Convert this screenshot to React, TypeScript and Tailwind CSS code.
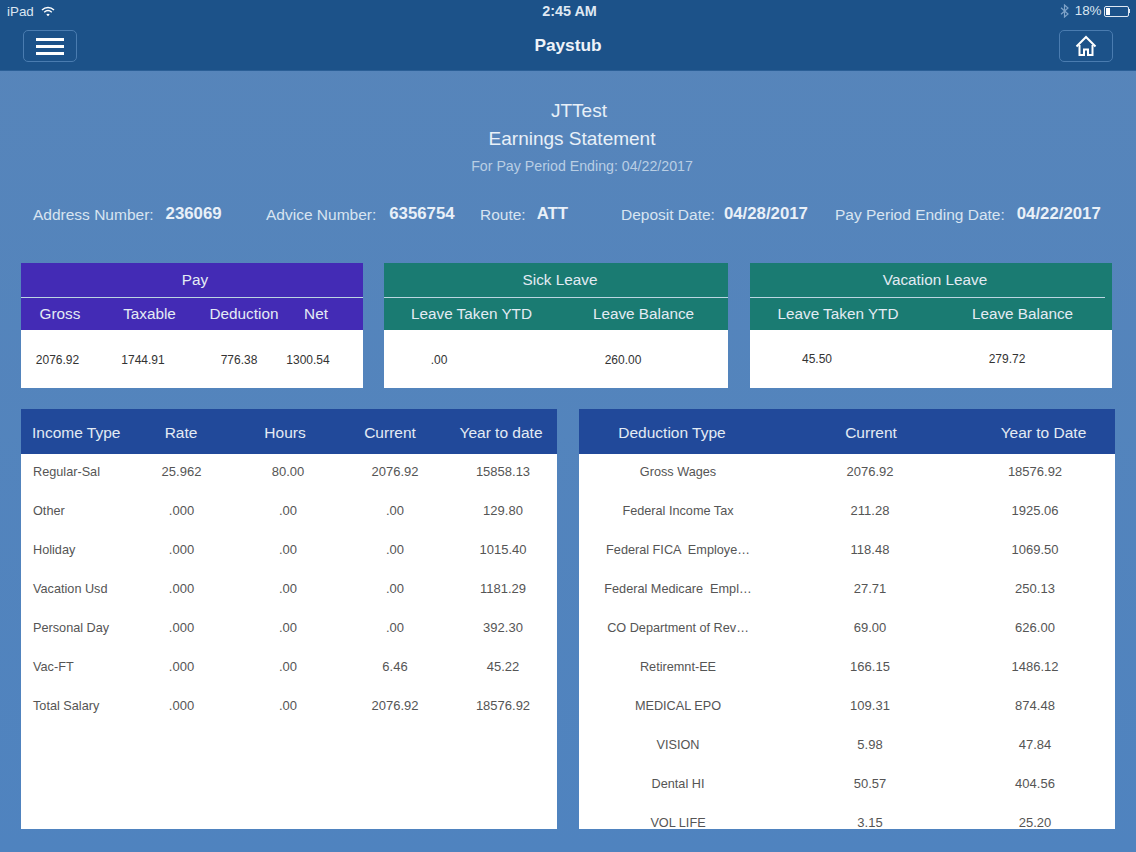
import React from "react";

const income = [
  ["Regular-Sal", "25.962", "80.00", "2076.92", "15858.13"],
  ["Other", ".000", ".00", ".00", "129.80"],
  ["Holiday", ".000", ".00", ".00", "1015.40"],
  ["Vacation Usd", ".000", ".00", ".00", "1181.29"],
  ["Personal Day", ".000", ".00", ".00", "392.30"],
  ["Vac-FT", ".000", ".00", "6.46", "45.22"],
  ["Total Salary", ".000", ".00", "2076.92", "18576.92"],
];

const deductions = [
  ["Gross Wages", "2076.92", "18576.92"],
  ["Federal Income Tax", "211.28", "1925.06"],
  ["Federal FICA  Employe…", "118.48", "1069.50"],
  ["Federal Medicare  Empl…", "27.71", "250.13"],
  ["CO Department of Rev…", "69.00", "626.00"],
  ["Retiremnt-EE", "166.15", "1486.12"],
  ["MEDICAL EPO", "109.31", "874.48"],
  ["VISION", "5.98", "47.84"],
  ["Dental HI", "50.57", "404.56"],
  ["VOL LIFE", "3.15", "25.20"],
];

function Info({ label, value, className, gap }: { label: string; value: string; className: string; gap: string }) {
  return (
    <div className={`flex items-center ${className}`}>
      <span className="text-[15.5px] text-[#d8e4f1]">{label}</span>
      <span className={`${gap} -mt-[2px] text-[16.8px] font-bold text-[#e9f0f8]`}>{value}</span>
    </div>
  );
}

function Wifi() {
  return (
    <svg width="14" height="11" viewBox="0 0 14 11" fill="none" stroke="#fff" strokeWidth="1.5">
      <path d="M1 4 C4.5 0.8 9.5 0.8 13 4" />
      <path d="M3.2 6.2 C5.4 4.3 8.6 4.3 10.8 6.2" />
      <path d="M7 10.2 L5.3 8.4 C6.3 7.6 7.7 7.6 8.7 8.4 Z" fill="#fff" stroke="none" />
    </svg>
  );
}

function Bluetooth() {
  return (
    <svg width="9" height="14" viewBox="0 0 9 14" fill="none" stroke="#7fa3c8" strokeWidth="1.2">
      <path d="M1 3.8 L8 10 L4.5 13 L4.5 1 L8 4 L1 10.2" />
    </svg>
  );
}

function Battery() {
  return (
    <div className="flex items-center">
      <div className="w-[25px] h-[11px] rounded-[2px] border border-[#dfe8f2] p-[1px]">
        <div className="w-[4px] h-full bg-white" />
      </div>
      <div className="w-[1.5px] h-[4px] bg-[#dfe8f2]" />
    </div>
  );
}

function Home() {
  return (
    <svg width="22" height="22" viewBox="0 0 22 22" fill="none" stroke="#fff" strokeWidth="2">
      <path d="M1.5 11.5 L11 2 L20.5 11.5" strokeLinejoin="miter" />
      <path d="M4.5 10 V20 H9 V14.5 H13 V20 H17.5 V10" />
    </svg>
  );
}

function Card({
  title,
  bg,
  className,
  headers,
  values,
  lineClass,
  titleClass,
}: {
  title: string;
  bg: string;
  className: string;
  headers: React.ReactNode;
  values: React.ReactNode;
  lineClass: string;
  titleClass: string;
}) {
  return (
    <div className={`flex flex-col h-[125px] shrink-0 ${className}`}>
      <div className={`${bg} h-[67px] flex flex-col text-[#e3ebf4]`}>
        <div className={`h-[34px] flex items-center justify-center text-[15.3px] ${titleClass}`}>{title}</div>
        <div className={`h-px bg-[#bcd6e2] ${lineClass}`} />
        {headers}
      </div>
      <div className="bg-white flex-1 text-[12px] text-[#333] pt-[2px]">{values}</div>
    </div>
  );
}

export default function App() {
  return (
    <div
      className="w-[1136px] h-[852px] overflow-hidden bg-gradient-to-b from-[#5785ba] to-[#4f83bf] text-white"
      style={{ fontFamily: '"Liberation Sans", Arial, sans-serif' }}
    >
      <header className="h-[71px] bg-[#1c5289] border-b border-[#2b5f97]">
        <div className="relative h-[23px] flex items-center justify-between pl-[7px] pr-[6px] text-[13.4px] text-[#dbe6f1]">
          <div className="flex items-center gap-[7px] pt-px">
            <span>iPad</span>
            <Wifi />
          </div>
          <div className="absolute left-0 right-0 text-center font-bold text-[14.4px] pl-[3px] text-[#dfe8f2]">2:45 AM</div>
          <div className="flex items-center gap-[6px]">
            <Bluetooth />
            <span>18%</span>
            <div className="-ml-[4px]"><Battery /></div>
          </div>
        </div>
        <div className="flex items-center justify-between pl-[23px] pr-[23px] h-[47px]">
          <button className="w-[54px] h-[32px] rounded-[5px] border-[1.5px] border-[#4a7cb0] flex flex-col items-center justify-center gap-[4px] mb-[1px]">
            <span className="w-[28px] h-[3px] bg-white" />
            <span className="w-[28px] h-[3px] bg-white" />
            <span className="w-[28px] h-[3px] bg-white" />
          </button>
          <div className="text-[17.3px] font-bold text-[#eef3f9] mb-[2px]">Paystub</div>
          <button className="w-[54px] h-[32px] rounded-[5px] border-[1.5px] border-[#4a7cb0] flex items-center justify-center mb-[1px]">
            <Home />
          </button>
        </div>
      </header>

      <section className="flex flex-col items-center pt-[28px]">
        <div className="h-[24px] leading-[24px] text-[19px] pl-[22px] text-[#e8f0f8]">JTTest</div>
        <div className="h-[32px] leading-[32px] text-[19px] pl-[8px] text-[#e8f0f8]">Earnings Statement</div>
        <div className="h-[22px] leading-[22px] text-[14.2px] pl-[28px] text-[#b9cee4]">For Pay Period Ending: 04/22/2017</div>
      </section>

      <section className="flex items-center h-[24px] mt-[26px] pl-[33px]">
        <Info label="Address Number:" value="236069" className="w-[233px]" gap="ml-[12px]" />
        <Info label="Advice Number:" value="6356754" className="w-[214px]" gap="ml-[13px]" />
        <Info label="Route:" value="ATT" className="w-[141px]" gap="ml-[11px]" />
        <Info label="Deposit Date:" value="04/28/2017" className="w-[214px]" gap="ml-[9px]" />
        <Info label="Pay Period Ending Date:" value="04/22/2017" className="w-[270px]" gap="ml-[12px]" />
      </section>

      <section className="flex mt-[36px] pl-[21px]">
        <Card
          title="Pay"
          bg="bg-[#432bb5]"
          className="w-[342px]"
          lineClass=""
          titleClass="pl-[6px]"
          headers={
            <div className="grid grid-cols-[78px_101px_88px_56px] h-[32px] items-center text-center text-[15.3px]">
              <span>Gross</span>
              <span>Taxable</span>
              <span className="whitespace-nowrap">Deduction</span>
              <span>Net</span>
            </div>
          }
          values={
            <div className="grid grid-cols-[73px_98px_94px_44px] h-full items-center text-center">
              <span>2076.92</span>
              <span className="-mt-px">1744.91</span>
              <span className="-mt-px">776.38</span>
              <span className="-mt-px">1300.54</span>
            </div>
          }
        />
        <Card
          title="Sick Leave"
          bg="bg-[#1a7b72]"
          className="w-[344px] ml-[21px]"
          lineClass=""
          titleClass="pl-[8px]"
          headers={
            <div className="grid grid-cols-[175px_169px] h-[32px] items-center text-center text-[15.3px]">
              <span>Leave Taken YTD</span>
              <span>Leave Balance</span>
            </div>
          }
          values={
            <div className="grid grid-cols-[110px_64px_130px] h-full items-center text-center">
              <span>.00</span>
              <span />
              <span>260.00</span>
            </div>
          }
        />
        <Card
          title="Vacation Leave"
          bg="bg-[#1a7b72]"
          className="w-[362px] ml-[22px]"
          lineClass="mr-[7px]"
          titleClass="pl-[8px]"
          headers={
            <div className="grid grid-cols-[176px_193px] h-[32px] items-center text-center text-[15.3px]">
              <span>Leave Taken YTD</span>
              <span>Leave Balance</span>
            </div>
          }
          values={
            <div className="grid grid-cols-[134px_246px] h-full items-center text-center -mt-px">
              <span>45.50</span>
              <span>279.72</span>
            </div>
          }
        />
      </section>

      <section className="flex mt-[21px] pl-[21px] gap-[22px]">
        <div className="w-[536px] h-[420px] bg-white overflow-hidden">
          <div className="grid grid-cols-[106px_108px_100px_110px_112px] h-[45px] pt-[2px] items-center text-center bg-[#21499a] text-[15.5px] text-[#e3ebf4]">
            <span className="text-left pl-[11px] whitespace-nowrap">Income Type</span>
            <span>Rate</span>
            <span>Hours</span>
            <span>Current</span>
            <span className="whitespace-nowrap">Year to date</span>
          </div>
          <div className="-mt-[2px]">
            {income.map((r, i) => (
              <div key={i} className="grid grid-cols-[107px_107px_106px_108px_108px] h-[39px] items-center text-center text-[13px] text-[#555]">
                <span className="text-left pl-[12px] whitespace-nowrap text-[12.7px] pt-[2px]">{r[0]}</span>
                <span>{r[1]}</span>
                <span>{r[2]}</span>
                <span>{r[3]}</span>
                <span>{r[4]}</span>
              </div>
            ))}
          </div>
        </div>
        <div className="w-[536px] h-[420px] bg-white overflow-hidden">
          <div className="grid grid-cols-[186px_212px_133px] h-[45px] pt-[2px] items-center text-center bg-[#21499a] text-[15.5px] text-[#e3ebf4]">
            <span>Deduction Type</span>
            <span>Current</span>
            <span>Year to Date</span>
          </div>
          <div className="-mt-[2px]">
            {deductions.map((r, i) => (
              <div key={i} className="grid grid-cols-[198px_186px_144px] h-[39px] items-center text-center text-[13px] text-[#555]">
                <span className="justify-self-center whitespace-pre text-[12.7px] pt-[2px]">{r[0]}</span>
                <span>{r[1]}</span>
                <span>{r[2]}</span>
              </div>
            ))}
          </div>
        </div>
      </section>
    </div>
  );
}
